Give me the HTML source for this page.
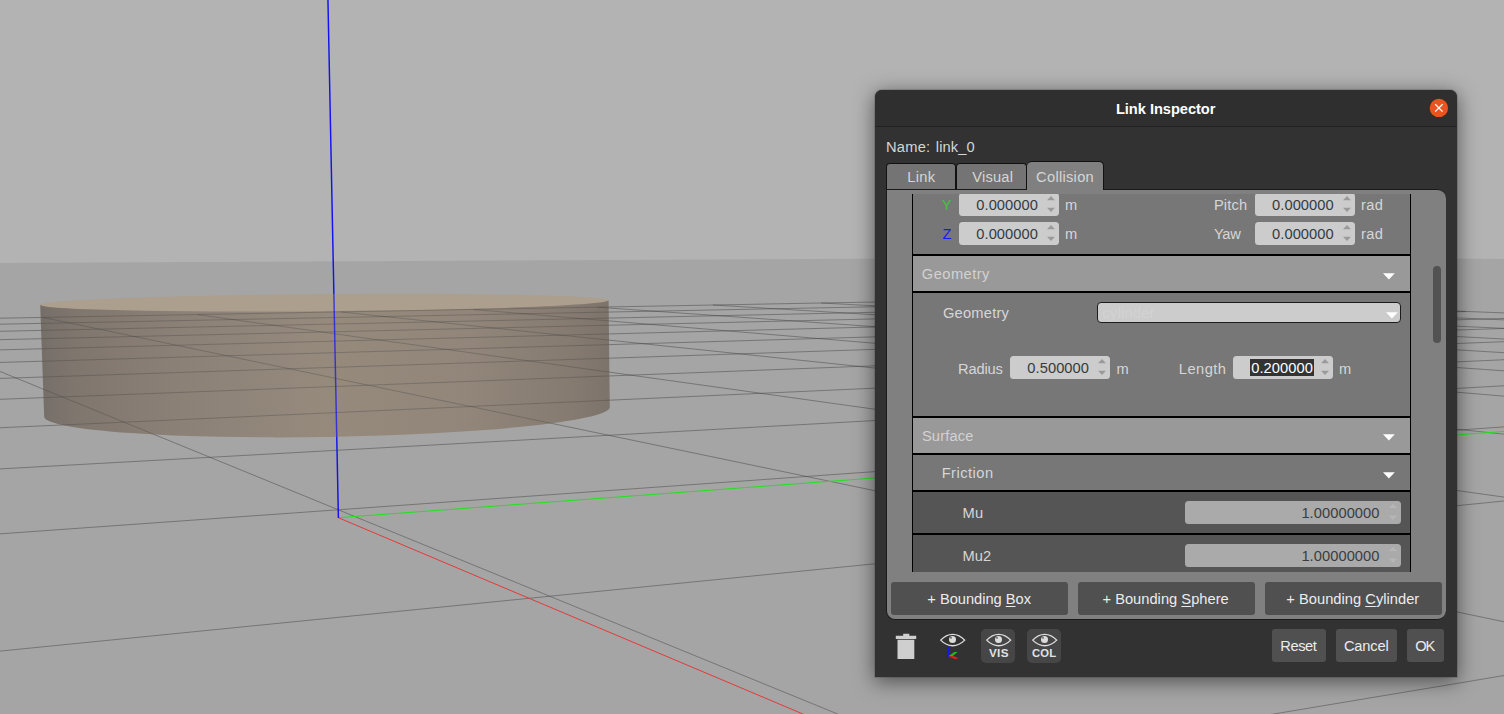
<!DOCTYPE html>
<html><head><meta charset="utf-8"><title>Link Inspector</title>
<style>
html,body{margin:0;padding:0}
body{width:1504px;height:714px;overflow:hidden;position:relative;background:#b3b3b3;font-family:"Liberation Sans",sans-serif}
#scene{position:absolute;left:0;top:0}
.t{position:absolute;white-space:nowrap;line-height:20px;height:20px}
.abs{position:absolute}
.sp{position:absolute;border-radius:3.5px}
.ar{position:absolute}
.btn{position:absolute;background:#505050;border-radius:3px}
u{text-decoration:underline;text-underline-offset:1.5px;text-decoration-thickness:1px}
</style></head><body>

<svg id="scene" width="1504" height="714" viewBox="0 0 1504 714">
<defs><linearGradient id="cylg" x1="0" x2="1" y1="0" y2="0"><stop offset="0" stop-color="#756e68"/><stop offset="0.06" stop-color="#7f766e"/><stop offset="0.25" stop-color="#8c8177"/><stop offset="0.5" stop-color="#968a7d"/><stop offset="0.75" stop-color="#92867a"/><stop offset="0.93" stop-color="#867b71"/><stop offset="1" stop-color="#7c736b"/></linearGradient></defs>
<path d="M-564.5 264.82L1259.2 256.10L1605.3 258.93L1509 719L-5 719Z" fill="#a5a5a5" transform="translate(0 0.8)"/>
<path d="M40.2 304.7 L44.2 417.2 A283 25.3 -0.95 0 0 609.8 407.8 L608.6 300.2 Z" fill="url(#cylg)"/>
<ellipse cx="324.4" cy="302.6" rx="284.3" ry="8.6" transform="rotate(-0.45 324.4 302.6)" fill="#ac9f8e"/>
<defs><path id="gl" d="M-5.0 318.3L1108.0 297.7M-5.0 324.3L1183.2 300.6M-5.0 331.4L1266.9 303.8M-5.0 339.8L1360.4 307.4M-5.0 350.0L1465.7 311.5M-5.0 362.6L1509.0 318.3M-5.0 378.6L1509.0 328.3M-5.0 399.5L1509.0 341.5M-5.0 428.0L1509.0 359.5M-5.0 469.2L1509.0 385.5M-5.0 534.2L1509.0 426.5M-5.0 369.4L849.9 719.0M-5.0 651.6L1509.0 500.5M42.8 317.4L1509.0 622.8M1243.8 719.0L1509.0 674.7M197.3 314.6L1509.0 497.8M340.4 311.9L1509.0 434.7M473.3 309.5L1509.0 396.6M597.2 307.2L1509.0 371.2M712.9 305.0L1509.0 353.0M821.2 303.0L1509.0 339.3M922.7 301.2L1509.0 328.6M1018.2 299.4L1509.0 320.1M1108.0 297.7L1509.0 313.1" stroke="#3c3c3c" stroke-width="1" fill="none"/><path id="zl" d="M338.4 517.9L327.9 -2" stroke="#1212f2" stroke-width="1.45" fill="none"/><clipPath id="cin"><path d="M40.2 304.7A284.3 8.6 -0.45 0 1 608.6 300.2L609.8 407.8A283 25.3 -0.95 0 1 44.2 417.2Z"/></clipPath><clipPath id="cout"><path clip-rule="evenodd" d="M0 0H1504V714H0ZM40.2 304.7A284.3 8.6 -0.45 0 1 608.6 300.2L609.8 407.8A283 25.3 -0.95 0 1 44.2 417.2Z"/></clipPath></defs>
<g clip-path="url(#cout)"><use href="#gl" opacity="0.46"/></g>
<g clip-path="url(#cin)"><use href="#gl" opacity="0.30"/></g>
<path d="M338.3 517.7L1510 431" stroke="#22e022" stroke-width="1" fill="none"/>
<path d="M338.3 517.7L806 715.3" stroke="#e23a3a" stroke-width="1" fill="none"/>
<g clip-path="url(#cout)"><use href="#zl"/></g><g clip-path="url(#cin)"><use href="#zl" opacity="0.72"/></g>
</svg>
<div class="abs" style="left:875px;top:90px;width:582px;height:587px;background:#323232;border-radius:7px 7px 0 0;box-shadow:0 4px 20px 1px rgba(0,0,0,.5),0 0 0 1px rgba(0,0,0,.12)"></div>
<div class="abs" style="left:875px;top:90px;width:582px;height:36px;background:#302f2f;border-radius:7px 7px 0 0;border-bottom:1px solid #222"></div>
<span id="title" class="t" style="left:1115.94px;top:98.92px;font-size:14.67px;color:#ffffff;font-weight:bold;letter-spacing:-0.049px;">Link Inspector</span>
<svg class="abs" style="left:1429px;top:98px" width="20" height="20" viewBox="0 0 20 20"><circle cx="9.9" cy="9.9" r="9.2" fill="#e95420"/><path d="M6.2 6.2L13.6 13.6M13.6 6.2L6.2 13.6" stroke="#fff" stroke-width="1.25" fill="none"/></svg>
<span id="name" class="t" style="left:885.94px;top:136.92px;font-size:14.67px;color:#d6d6d6;font-weight:normal;letter-spacing:0.260px;">Name:</span>
<span id="link0" class="t" style="left:935.76px;top:136.92px;font-size:14.67px;color:#d6d6d6;font-weight:normal;letter-spacing:0.144px;">link_0</span>
<div class="abs" style="left:886px;top:163px;width:70px;height:27px;box-sizing:border-box;background:#747474;border:1px solid #111;border-bottom:none;border-radius:4px 4px 0 0"></div>
<div class="abs" style="left:956px;top:163px;width:71px;height:27px;box-sizing:border-box;background:#747474;border:1px solid #111;border-bottom:none;border-radius:4px 4px 0 0"></div>
<div class="abs" style="left:886px;top:189px;width:560px;height:431px;box-sizing:border-box;background:#808080;border:1px solid #1a1a1a;border-right:none;border-radius:0 9px 9px 9px"></div>
<div class="abs" style="left:1027px;top:161px;width:77px;height:29px;box-sizing:border-box;background:#808080;border-top:1px solid #111;border-right:1px solid #111;border-radius:5px 5px 0 0"></div>
<span id="tab1" class="t" style="left:907.28px;top:166.92px;font-size:14.67px;color:#d6d6d6;font-weight:normal;letter-spacing:0.293px;">Link</span>
<span id="tab2" class="t" style="left:972.30px;top:166.92px;font-size:14.67px;color:#d6d6d6;font-weight:normal;letter-spacing:0.208px;">Visual</span>
<span id="tab3" class="t" style="left:1036.12px;top:166.92px;font-size:14.67px;color:#d6d6d6;font-weight:normal;letter-spacing:0.280px;">Collision</span>
<div class="abs" style="left:887px;top:194px;width:558px;height:378px;overflow:hidden">
<div class="abs" style="left:25px;top:-14px;width:499px;height:392px;background:#000"></div>
<div class="abs" style="left:26px;top:-14px;width:497px;height:74px;background:#777777"></div>
<div class="abs" style="left:26px;top:62px;width:497px;height:35px;background:#999999"></div>
<div class="abs" style="left:26px;top:99px;width:497px;height:123px;background:#777777"></div>
<div class="abs" style="left:26px;top:224px;width:497px;height:35px;background:#999999"></div>
<div class="abs" style="left:26px;top:261px;width:497px;height:35px;background:#777777"></div>
<div class="abs" style="left:26px;top:298px;width:497px;height:41px;background:#555555"></div>
<div class="abs" style="left:26px;top:341px;width:497px;height:41px;background:#555555"></div>
</div>
<div class="abs" style="left:887px;top:194px;width:558px;height:378px;overflow:hidden"><div class="abs" style="left:-887px;top:-194px;width:1504px;height:714px">
<div class="sp" style="left:958.8px;top:193px;width:100.2px;height:23px;background:#cccccc"><svg class="ar" style="right:3.6px;top:0" width="8" height="23" viewBox="0 0 8 23"><path d="M0 7.2L4 2.9000000000000004L8 7.2ZM0 14.8L4 19.1L8 14.8Z" fill="#9a9a9a"/></svg></div>
<div class="sp" style="left:958.8px;top:222px;width:100.2px;height:23px;background:#cccccc"><svg class="ar" style="right:3.6px;top:0" width="8" height="23" viewBox="0 0 8 23"><path d="M0 7.2L4 2.9000000000000004L8 7.2ZM0 14.8L4 19.1L8 14.8Z" fill="#9a9a9a"/></svg></div>
<div class="sp" style="left:1254.8px;top:193px;width:100.2px;height:23px;background:#cccccc"><svg class="ar" style="right:3.6px;top:0" width="8" height="23" viewBox="0 0 8 23"><path d="M0 7.2L4 2.9000000000000004L8 7.2ZM0 14.8L4 19.1L8 14.8Z" fill="#9a9a9a"/></svg></div>
<div class="sp" style="left:1254.8px;top:222px;width:100.2px;height:23px;background:#cccccc"><svg class="ar" style="right:3.6px;top:0" width="8" height="23" viewBox="0 0 8 23"><path d="M0 7.2L4 2.9000000000000004L8 7.2ZM0 14.8L4 19.1L8 14.8Z" fill="#9a9a9a"/></svg></div>
<span id="Y" class="t" style="left:941.76px;top:194.92px;font-size:14.67px;color:#40c640;font-weight:normal;letter-spacing:0.000px;">Y</span>
<span id="Z" class="t" style="left:942.40px;top:223.92px;font-size:14.67px;color:#1818fa;font-weight:normal;letter-spacing:0.000px;">Z</span>
<span id="v1" class="t" style="left:976.30px;top:194.92px;font-size:14.67px;color:#343b40;font-weight:normal;letter-spacing:0.057px;">0.000000</span>
<span id="v2" class="t" style="left:976.30px;top:223.92px;font-size:14.67px;color:#343b40;font-weight:normal;letter-spacing:0.057px;">0.000000</span>
<span id="m1" class="t" style="left:1064.94px;top:194.92px;font-size:14.67px;color:#d6d6d6;font-weight:normal;letter-spacing:0.000px;">m</span>
<span id="m2" class="t" style="left:1064.94px;top:223.92px;font-size:14.67px;color:#d6d6d6;font-weight:normal;letter-spacing:0.000px;">m</span>
<span id="pitch" class="t" style="left:1213.94px;top:194.92px;font-size:14.67px;color:#d6d6d6;font-weight:normal;letter-spacing:0.140px;">Pitch</span>
<span id="yaw" class="t" style="left:1213.94px;top:223.92px;font-size:14.67px;color:#d6d6d6;font-weight:normal;letter-spacing:-0.280px;">Yaw</span>
<span id="v3" class="t" style="left:1272.12px;top:194.92px;font-size:14.67px;color:#343b40;font-weight:normal;letter-spacing:0.057px;">0.000000</span>
<span id="v4" class="t" style="left:1272.12px;top:223.92px;font-size:14.67px;color:#343b40;font-weight:normal;letter-spacing:0.057px;">0.000000</span>
<span id="rad1" class="t" style="left:1360.94px;top:194.92px;font-size:14.67px;color:#d6d6d6;font-weight:normal;letter-spacing:0.360px;">rad</span>
<span id="rad2" class="t" style="left:1360.94px;top:223.92px;font-size:14.67px;color:#d6d6d6;font-weight:normal;letter-spacing:0.360px;">rad</span>
<span id="geo1" class="t" style="left:921.86px;top:263.92px;font-size:14.67px;color:#d2d2d2;font-weight:normal;letter-spacing:0.446px;">Geometry</span>
<svg class="abs" style="left:1383.3px;top:272.5px" width="12" height="7" viewBox="0 0 12 7"><path d="M0 0.3H11.8L5.9 6.6Z" fill="#fff"/></svg>
<span id="geo2" class="t" style="left:942.90px;top:302.92px;font-size:14.67px;color:#d6d6d6;font-weight:normal;letter-spacing:0.240px;">Geometry</span>
<div class="abs" style="left:1097px;top:302px;width:304px;height:21px;box-sizing:border-box;background:#cccccc;border:1px solid #1c1c1c;border-radius:4px"></div>
<span id="cyl" class="t" style="left:1102.60px;top:302.92px;font-size:14.67px;color:#d3d3d3;font-weight:normal;letter-spacing:0.200px;">cylinder</span>
<svg class="abs" style="left:1386.3px;top:311.6px" width="12" height="7" viewBox="0 0 12 7"><path d="M0 0.3H11.8L5.9 6.6Z" fill="#fff"/></svg>
<span id="radius" class="t" style="left:958.12px;top:358.92px;font-size:14.67px;color:#d6d6d6;font-weight:normal;letter-spacing:-0.192px;">Radius</span>
<div class="sp" style="left:1010px;top:356px;width:100px;height:23px;background:#cccccc"><svg class="ar" style="right:3.6px;top:0" width="8" height="23" viewBox="0 0 8 23"><path d="M0 7.2L4 2.9000000000000004L8 7.2ZM0 14.8L4 19.1L8 14.8Z" fill="#9a9a9a"/></svg></div>
<span id="v5" class="t" style="left:1027.30px;top:357.92px;font-size:14.67px;color:#343b40;font-weight:normal;letter-spacing:0.080px;">0.500000</span>
<span id="m3" class="t" style="left:1116.48px;top:358.92px;font-size:14.67px;color:#d6d6d6;font-weight:normal;letter-spacing:0.000px;">m</span>
<span id="length" class="t" style="left:1178.76px;top:358.92px;font-size:14.67px;color:#d6d6d6;font-weight:normal;letter-spacing:0.480px;">Length</span>
<div class="sp" style="left:1232.8px;top:356px;width:100.2px;height:23px;background:#cccccc"><svg class="ar" style="right:3.6px;top:0" width="8" height="23" viewBox="0 0 8 23"><path d="M0 7.2L4 2.9000000000000004L8 7.2ZM0 14.8L4 19.1L8 14.8Z" fill="#9a9a9a"/></svg></div>
<div class="abs" style="left:1249.8px;top:359.3px;width:64.2px;height:16.6px;background:#333333"></div>
<span id="v6" class="t" style="left:1251.20px;top:357.92px;font-size:14.67px;color:#ffffff;font-weight:normal;letter-spacing:0.080px;">0.200000</span>
<span id="m4" class="t" style="left:1338.94px;top:358.92px;font-size:14.67px;color:#d6d6d6;font-weight:normal;letter-spacing:0.000px;">m</span>
<span id="surface" class="t" style="left:921.94px;top:425.92px;font-size:14.67px;color:#d2d2d2;font-weight:normal;letter-spacing:0.160px;">Surface</span>
<svg class="abs" style="left:1383.3px;top:434.4px" width="12" height="7" viewBox="0 0 12 7"><path d="M0 0.3H11.8L5.9 6.6Z" fill="#fff"/></svg>
<span id="friction" class="t" style="left:941.68px;top:462.92px;font-size:14.67px;color:#d6d6d6;font-weight:normal;letter-spacing:0.491px;">Friction</span>
<svg class="abs" style="left:1383.3px;top:471.6px" width="12" height="7" viewBox="0 0 12 7"><path d="M0 0.3H11.8L5.9 6.6Z" fill="#fff"/></svg>
<span id="mu" class="t" style="left:962.48px;top:502.92px;font-size:14.67px;color:#d6d6d6;font-weight:normal;letter-spacing:0.400px;">Mu</span>
<div class="sp" style="left:1184.9px;top:501.3px;width:216.1px;height:22.6px;background:#aaaaaa"><svg class="ar" style="right:3.6px;top:0" width="8" height="22.6" viewBox="0 0 8 22.6"><path d="M0 7.000000000000001L4 2.700000000000001L8 7.000000000000001ZM0 14.600000000000001L4 18.9L8 14.600000000000001Z" fill="#b6b6b6"/></svg></div>
<span id="v7" class="t" style="left:1301.40px;top:502.92px;font-size:14.67px;color:#3a3d40;font-weight:normal;letter-spacing:0.071px;">1.00000000</span>
<span id="mu2" class="t" style="left:962.48px;top:545.92px;font-size:14.67px;color:#d6d6d6;font-weight:normal;letter-spacing:0.120px;">Mu2</span>
<div class="sp" style="left:1184.9px;top:544.1px;width:216.1px;height:22.6px;background:#aaaaaa"><svg class="ar" style="right:3.6px;top:0" width="8" height="22.6" viewBox="0 0 8 22.6"><path d="M0 7.000000000000001L4 2.700000000000001L8 7.000000000000001ZM0 14.600000000000001L4 18.9L8 14.600000000000001Z" fill="#b6b6b6"/></svg></div>
<span id="v8" class="t" style="left:1301.40px;top:545.92px;font-size:14.67px;color:#3a3d40;font-weight:normal;letter-spacing:0.071px;">1.00000000</span>
</div></div>
<div class="abs" style="left:1433.3px;top:266px;width:7.7px;height:77px;background:#525252;border-radius:4px"></div>
<div class="btn" style="left:891.4px;top:582px;width:176.5px;height:33px"></div>
<div class="btn" style="left:1078.1px;top:582px;width:176.7px;height:33px"></div>
<div class="btn" style="left:1264.7px;top:582px;width:177.2px;height:33px"></div>
<span id="bb" class="t" style="left:927.30px;top:588.92px;font-size:14.67px;color:#ececec;font-weight:normal;letter-spacing:-0.018px;">+ Bounding <u>B</u>ox</span>
<span id="bs" class="t" style="left:1102.48px;top:588.92px;font-size:14.67px;color:#ececec;font-weight:normal;letter-spacing:0.020px;">+ Bounding <u>S</u>phere</span>
<span id="bc" class="t" style="left:1286.30px;top:588.92px;font-size:14.67px;color:#ececec;font-weight:normal;letter-spacing:0.027px;">+ Bounding <u>C</u>ylinder</span>
<div class="btn" style="left:1272.1px;top:629.3px;width:53.9px;height:32.5px"></div>
<div class="btn" style="left:1336px;top:629.3px;width:60.8px;height:32.5px"></div>
<div class="btn" style="left:1407px;top:629.3px;width:36.9px;height:32.5px"></div>
<span id="reset" class="t" style="left:1280.30px;top:635.92px;font-size:14.67px;color:#ececec;font-weight:normal;letter-spacing:-0.420px;">Reset</span>
<span id="cancel" class="t" style="left:1343.94px;top:635.92px;font-size:14.67px;color:#ececec;font-weight:normal;letter-spacing:-0.176px;">Cancel</span>
<span id="ok" class="t" style="left:1415.30px;top:635.92px;font-size:14.67px;color:#ececec;font-weight:normal;letter-spacing:-1.120px;">OK</span>
<svg class="abs" style="left:894px;top:632px" width="24" height="29" viewBox="0 0 24 29"><path d="M9.2 1.8H15.3V3.8H22.2V7.1H1.8V3.8H9.2ZM3.5 7.7H20.3V27.1H3.5Z" fill="#cfcfcf"/></svg>
<svg class="abs" style="left:939.8px;top:633px" width="26" height="27" viewBox="0 0 26 27"><g fill="none" stroke="#dcdcdc" stroke-width="1.35"><path d="M0.7 7.1C4.5 2.9 8.6 1.3 12.7 1.3C16.8 1.3 20.9 2.9 24.7 7.1C20.9 11 16.8 12.7 12.7 12.7C8.6 12.7 4.5 11 0.7 7.1Z"/></g><circle cx="12.5" cy="6.5" r="3.5" fill="#dcdcdc"/><circle cx="11" cy="4.9" r="0.8" fill="#444"/><path d="M8.2 13.2L9.4 15.6V24.2H7.1V15.6Z" fill="#1616f0"/><path d="M8.4 23.2L14.3 18.9L17.6 18.9L12.8 23Z" fill="#27b527"/><path d="M8.4 23.4L13 22.9L18.4 25.1L15.4 26.2Z" fill="#e02020"/></svg>
<div class="abs" style="left:981px;top:628.6px;width:33.7px;height:34.3px;background:#464646;border-radius:5px"></div>
<div class="abs" style="left:1027px;top:628.6px;width:34px;height:34.3px;background:#464646;border-radius:5px"></div>
<svg class="abs" style="left:985.9px;top:633px" width="26" height="14" viewBox="0 0 26 14"><g fill="none" stroke="#dcdcdc" stroke-width="1.35"><path d="M0.7 7.1C4.5 2.9 8.6 1.3 12.7 1.3C16.8 1.3 20.9 2.9 24.7 7.1C20.9 11 16.8 12.7 12.7 12.7C8.6 12.7 4.5 11 0.7 7.1Z"/></g><circle cx="12.5" cy="6.5" r="3.5" fill="#dcdcdc"/><circle cx="11" cy="4.9" r="0.8" fill="#444"/></svg>
<svg class="abs" style="left:1032px;top:633px" width="26" height="14" viewBox="0 0 26 14"><g fill="none" stroke="#dcdcdc" stroke-width="1.35"><path d="M0.7 7.1C4.5 2.9 8.6 1.3 12.7 1.3C16.8 1.3 20.9 2.9 24.7 7.1C20.9 11 16.8 12.7 12.7 12.7C8.6 12.7 4.5 11 0.7 7.1Z"/></g><circle cx="12.5" cy="6.5" r="3.5" fill="#dcdcdc"/><circle cx="11" cy="4.9" r="0.8" fill="#444"/></svg>
<span id="vis" class="t" style="left:988.50px;top:642.73px;font-size:10.6px;color:#e2e2e2;font-weight:bold;letter-spacing:0.300px;transform:scaleX(1.1);transform-origin:0 0;">VIS</span>
<span id="col" class="t" style="left:1032.00px;top:642.73px;font-size:10.6px;color:#e2e2e2;font-weight:bold;letter-spacing:0.200px;transform:scaleX(1.06);transform-origin:0 0;">COL</span>
</body></html>
